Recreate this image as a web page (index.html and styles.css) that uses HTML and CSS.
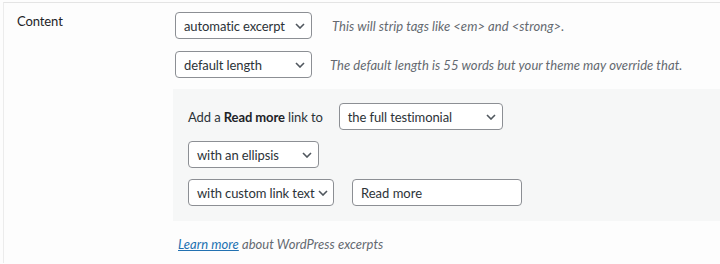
FILE: index.html
```html
<!DOCTYPE html>
<html lang="en">
<head>
    <meta charset="UTF-8">
    <title>Excerpt settings</title>
    <link rel="stylesheet" href="styles.css">
</head>
<body>
    <div class="settings">
        <div class="label">Content</div>

        <div class="fields">
            <div class="row">
                <div class="select w-excerpt">
                    <span>automatic excerpt</span>
                    <svg viewBox="0 0 10 6"><path d="M1 1l4 4 4-4"/></svg>
                </div>
                <p class="desc">This will strip tags like &lt;em&gt; and &lt;strong&gt;.</p>
            </div>

            <div class="row">
                <div class="select w-excerpt">
                    <span>default length</span>
                    <svg viewBox="0 0 10 6"><path d="M1 1l4 4 4-4"/></svg>
                </div>
                <p class="desc desc-length">The default length is 55 words but your theme may override that.</p>
            </div>

            <!-- Read more options -->
            <div class="more-box">
                <div class="row">
                    <span class="more-label">Add a <strong>Read more</strong> link to</span>
                    <div class="select w-target">
                        <span>the full testimonial</span>
                        <svg viewBox="0 0 10 6"><path d="M1 1l4 4 4-4"/></svg>
                    </div>
                </div>
                <div class="row">
                    <div class="select w-ellipsis">
                        <span>with an ellipsis</span>
                        <svg viewBox="0 0 10 6"><path d="M1 1l4 4 4-4"/></svg>
                    </div>
                </div>
                <div class="row">
                    <div class="select w-custom">
                        <span>with custom link text</span>
                        <svg viewBox="0 0 10 6"><path d="M1 1l4 4 4-4"/></svg>
                    </div>
                    <input class="text-input" type="text" value="Read more">
                </div>
            </div>

            <p class="learn"><a href="#">Learn more</a> about WordPress excerpts</p>
        </div>
    </div>
</body>
</html>
```

FILE: styles.css
```css
/* General Styles */
body {
    margin: 0;
    background: #fdfdfd;
    font-family: Lato, "Open Sans", sans-serif;
    font-size: 13px;
    letter-spacing: -0.1px;
    color: #2c3338;
}

.settings {
    display: flex;
    margin: 2px 0 0 3px;
    border-top: 1px solid #e4e4e4;
    border-left: 1px solid #ececec;
    min-height: 260px;
}

.label {
    width: 156px;
    padding: 10px 0 0 13px;
    color: #1d2327;
}

.fields {
    flex: 1;
    display: flex;
    flex-direction: column;
    gap: 12px;
    padding-top: 9px;
}

.row {
    display: flex;
    align-items: center;
    padding-left: 2px;
}

.select {
    box-sizing: border-box;
    height: 27px;
    display: flex;
    align-items: center;
    justify-content: space-between;
    padding: 0 6px 0 8px;
    background: #fff;
    border: 1px solid #8c8f94;
    border-radius: 4px;
    color: #2c3338;
    white-space: nowrap;
}

.select svg {
    flex: none;
    width: 10px;
    height: 6px;
    fill: none;
    stroke: #50575e;
    stroke-width: 1.6;
}

.w-excerpt { width: 137px; }
.w-target { width: 164px; }
.w-ellipsis { width: 131px; }
.w-custom { width: 146px; padding-right: 9px; }

.w-custom span {
    margin-right: 3px;
}

.desc {
    margin: 0 0 0 20px;
    font-style: italic;
    letter-spacing: 0.05px;
    color: #646970;
}

.desc-length {
    margin-left: 18px;
}

.more-box {
    display: flex;
    flex-direction: column;
    gap: 11px;
    padding: 14px 0 15px 13px;
    background: #f6f7f7;
    margin-top: -1px;
}

.more-label {
    margin-right: 16px;
}

.more-label strong {
    font-weight: 700;
    color: #1d2327;
}

.text-input {
    box-sizing: border-box;
    width: 170px;
    height: 27px;
    margin-left: 18px;
    padding: 0 8px;
    border: 1px solid #8c8f94;
    border-radius: 4px;
    font: inherit;
    color: #2c3338;
    background: #fff;
}

.learn {
    margin: 3px 0 0 5px;
    font-style: italic;
    letter-spacing: 0.05px;
    color: #646970;
}

.learn a {
    color: #2271b1;
}
```
